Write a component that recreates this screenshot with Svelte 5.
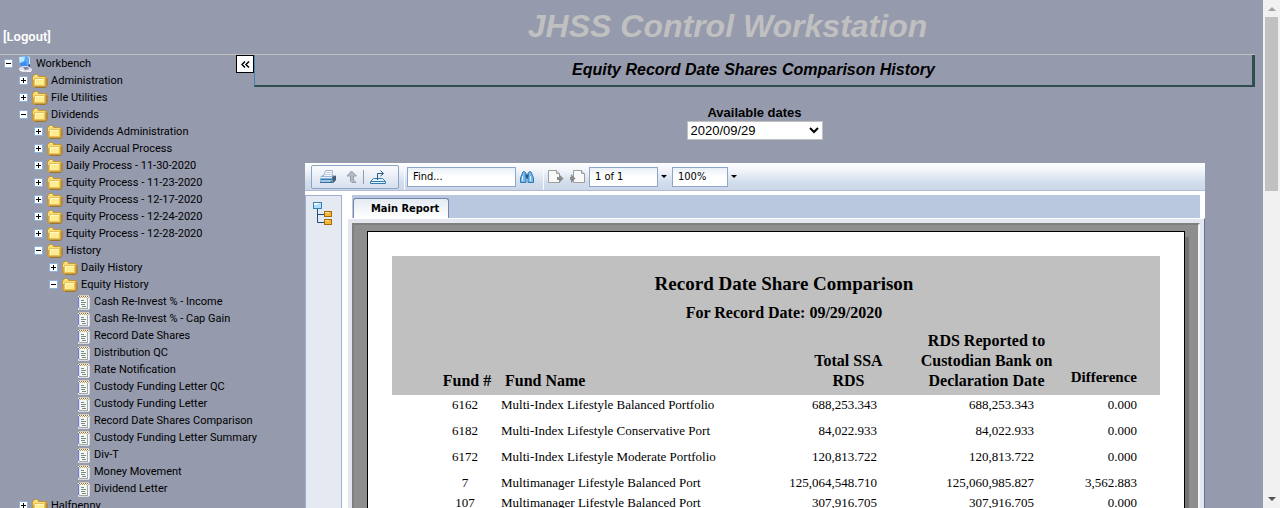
<script>
  const folder = (label, children = [], open = false) => ({ label, children, open, icon: 'folder' });
  const doc = (label) => ({ label, icon: 'doc' });

  let tree = $state([
    {
      label: 'Workbench',
      icon: 'computer',
      open: true,
      children: [
        folder('Administration'),
        folder('File Utilities'),
        folder('Dividends', [
          folder('Dividends Administration'),
          folder('Daily Accrual Process'),
          folder('Daily Process - 11-30-2020'),
          folder('Equity Process - 11-23-2020'),
          folder('Equity Process - 12-17-2020'),
          folder('Equity Process - 12-24-2020'),
          folder('Equity Process - 12-28-2020'),
          folder('History', [
            folder('Daily History'),
            folder('Equity History', [
              doc('Cash Re-Invest % - Income'),
              doc('Cash Re-Invest % - Cap Gain'),
              doc('Record Date Shares'),
              doc('Distribution QC'),
              doc('Rate Notification'),
              doc('Custody Funding Letter QC'),
              doc('Custody Funding Letter'),
              doc('Record Date Shares Comparison'),
              doc('Custody Funding Letter Summary'),
              doc('Div-T'),
              doc('Money Movement'),
              doc('Dividend Letter')
            ], true)
          ], true)
        ], true),
        folder('Halfpenny')
      ]
    }
  ]);

  const rows = [
    { fund: '6162', name: 'Multi-Index Lifestyle Balanced Portfolio', ssa: '688,253.343', rds: '688,253.343', diff: '0.000', tall: true },
    { fund: '6182', name: 'Multi-Index Lifestyle Conservative Port', ssa: '84,022.933', rds: '84,022.933', diff: '0.000', tall: true },
    { fund: '6172', name: 'Multi-Index Lifestyle Moderate Portfolio', ssa: '120,813.722', rds: '120,813.722', diff: '0.000', tall: true },
    { fund: '7', name: 'Multimanager Lifestyle Balanced Port', ssa: '125,064,548.710', rds: '125,060,985.827', diff: '3,562.883' },
    { fund: '107', name: 'Multimanager Lifestyle Balanced Port', ssa: '307,916.705', rds: '307,916.705', diff: '0.000' }
  ];
</script>

{#snippet icon(name)}
  {#if name === 'folder'}
    <svg width="16" height="16" viewBox="0 0 16 16" aria-hidden="true">
      <path d="M0.5 12.5V3.500L2.500 1.500H5.500L7 3.500H14L15 5V12.500L13.500 14H1.500Z" fill="#d2a548" stroke="#c4963a" />
      <path d="M1 4L3 2H5L6.500 4H13V7H1Z" fill="#f8dc74" />
      <path d="M3 2.500H5" stroke="#fff2a6" />
      <path d="M15 5.500V12.500L13.500 14.500H3" fill="none" stroke="#9c7534" />
      <path d="M2.500 5.500H12.500V12.500H2.500Z" fill="#fdec90" stroke="#e6c257" />
      <path d="M3.500 11.500V6.500H12" fill="none" stroke="#fff9c9" />
    </svg>
  {:else if name === 'doc'}
    <svg width="14" height="16" viewBox="0 0 14 16" aria-hidden="true">
      <path d="M1 2H12V15H1Z" fill="#f3f8f5" />
      <path d="M1.500 3V14" stroke="#7a7cc4" />
      <path d="M2.500 3V14" stroke="#dfe2f5" />
      <path d="M10.500 4V14M2 14.500H11" stroke="#a3a8a8" />
      <path d="M12.500 3V15M1 15.500H12" stroke="#d9dbe0" />
      <path d="M2 1.500H12" stroke="#d7cdb8" />
      <path d="M2 2.500H12" stroke="#8e6a30" stroke-dasharray="1 1" />
      <path d="M3 3.500H12" stroke="#c9a566" stroke-dasharray="1 1" />
      <path d="M4 6.500H7M4 8.500H9M4 10.500H8M5 12.500H9" stroke="#7b8886" />
    </svg>
  {:else}
    <svg width="16" height="18" viewBox="0 0 16 18" aria-hidden="true">
      <path d="M2 2L9 1H12V11L9 12L3 11Z" fill="#5aa9f4" />
      <path d="M2 2L8 1.500L7 6L2.500 8Z" fill="#bfe6ff" />
      <path d="M3 9L9 6L10 11L4 11Z" fill="#3e8cee" />
      <path d="M10.500 1.500L12.500 2.500V11" fill="none" stroke="#d6e4f7" />
      <path d="M11 10L13 9V13H11Z" fill="#42529a" />
      <path d="M2 13L6 11H11L15 14V16L12 17H5L2 15Z" fill="#dddfe9" />
      <path d="M6 12L11 12L12 14L8 15Z" fill="#7f83a5" />
      <path d="M3 15.500H7M10 16.500H14" stroke="#f6f6fb" />
    </svg>
  {/if}
{/snippet}

{#snippet branch(nodes, level)}
  <ul>
    {#each nodes as node}
      <li>
        <div class="node" style:padding-left="{4 + level * 15}px">
          {#if node.children}
            <button class="toggle" aria-label="Toggle {node.label}" aria-expanded={node.open} onclick={() => (node.open = !node.open)}>
              <svg width="9" height="9" viewBox="0 0 9 9" aria-hidden="true">
                <rect x="0.5" y="0.5" width="8" height="8" fill="#fff" stroke="#8db3d9" />
                <path d={node.open ? 'M2 4.5H7' : 'M2 4.5H7M4.5 2V7'} stroke="#000" />
              </svg>
            </button>
          {:else}
            <span class="toggle"></span>
          {/if}
          {@render icon(node.icon)}
          <a href="#{node.label}">{node.label}</a>
        </div>
        {#if node.open}{@render branch(node.children, level + 1)}{/if}
      </li>
    {/each}
  </ul>
{/snippet}

<div class="window">
  <div class="page">
    <header>
      <a class="logout" href="#logout">[Logout]</a>
      <h1>JHSS Control Workstation</h1>
    </header>
    <div class="body">
      <nav aria-label="Workbench">
        {@render branch(tree, 0)}
        <button class="collapse" aria-label="Collapse menu">
          <svg width="9" height="7" viewBox="0 0 9 7" aria-hidden="true">
            <path d="M4 .5L1 3.500L4 6.500M8 .5L5 3.500L8 6.500" fill="none" stroke="#000" stroke-width="1.500" />
          </svg>
        </button>
      </nav>
      <main>
        <h2>Equity Record Date Shares Comparison History</h2>
        <div class="dates">
          <label for="date">Available dates</label>
          <div class="select">
            <select id="date"><option>2020/09/29</option></select>
            <svg width="10" height="7" viewBox="0 0 10 7" aria-hidden="true">
              <path d="M1 1L5 5L9 1" fill="none" stroke="#000" stroke-width="2" />
            </svg>
          </div>
        </div>

        <section class="viewer">
          <div class="toolbar">
            <div class="group">
              <button aria-label="Print">
                <svg width="18" height="16" viewBox="0 0 18 16" aria-hidden="true">
                  <path d="M1 8L4 6H14L17 7V11L14 14H1Z" fill="#7fb0da" />
                  <path d="M4.500 7.500L6.500 1.500H13.500L13 7.500Z" fill="#f4f8fd" stroke="#a3b6cc" />
                  <path d="M7 3.500H12M6 5.500H12" stroke="#c2d0df" />
                  <path d="M13 8L17 6.500V11L14 14Z" fill="#4a5b75" />
                  <path d="M1 8.500H13" stroke="#e2f1fd" />
                  <path d="M2 10.500H13" stroke="#3f78ad" />
                  <path d="M1 13.500H14" stroke="#3a6c9f" />
                  <path d="M2 12H12" stroke="#bddbf2" />
                  <path d="M11 12.500H13" stroke="#44b850" />
                </svg>
              </button>
              <button aria-label="Drill up">
                <svg width="12" height="14" viewBox="0 0 12 14" aria-hidden="true">
                  <path d="M5.500 1L10.500 6H7.500V10L10 12.500H6L4.500 11V6H1Z" fill="#b4b9c6" stroke="#979eae" />
                </svg>
              </button>
              <span class="rule"></span>
              <button aria-label="Export">
                <svg width="18" height="16" viewBox="0 0 18 16" aria-hidden="true">
                  <path d="M4.500 9.500H13.500L16.500 12.500V14.500H1.500V12.500Z" fill="#e4f4ff" stroke="#347daf" />
                  <path d="M2 12.500H16" stroke="#347daf" />
                  <path d="M8.500 11V4.500H14M11.500 1.500L14.500 4.500L11.500 7" fill="none" stroke="#245d89" />
                </svg>
              </button>
            </div>
            <span class="divider"></span>
            <input class="find" aria-label="Find" value="Find..." />
            <button class="binoculars" aria-label="Search">
              <svg width="16" height="14" viewBox="0 0 16 14" aria-hidden="true">
                <path d="M1.500 12.500V8L4 2L5 1.500L7 3V12.500Z" fill="#78b7e7" stroke="#2d78b8" />
                <path d="M14.500 12.500V8L12 2L11 1.500L9 3V12.500Z" fill="#78b7e7" stroke="#2d78b8" />
                <path d="M6.500 5.500H9.500M7 7.500H9" stroke="#1c5b9b" stroke-width="2" />
                <path d="M3.500 6V11M11.500 6V11" stroke="#d9f0ff" />
              </svg>
            </button>
            <span class="divider"></span>
            <button aria-label="Previous page">
              <svg width="16" height="14" viewBox="0 0 16 14" aria-hidden="true">
                <path d="M.5 .5H8.500L11.500 3.500V12.500H.5Z" fill="#f9f9f9" stroke="#9d9d9d" />
                <path d="M8.500 .5V3.500H11.500" fill="#ddd" stroke="#9d9d9d" />
                <path d="M9 7H11V4L15.500 8.500L11 13V10H9Z" fill="#8b8b8b" />
              </svg>
            </button>
            <button class="next" aria-label="Next page">
              <svg width="16" height="14" viewBox="0 0 16 14" aria-hidden="true">
                <path d="M4.500 .5H12.500L15.500 3.500V12.500H4.500Z" fill="#f9f9f9" stroke="#9d9d9d" />
                <path d="M12.500 .5V3.500H15.500" fill="#ddd" stroke="#9d9d9d" />
                <path d="M1 7H2V4L6.500 8.500L2 13V10H1Z" fill="#8b8b8b" />
              </svg>
            </button>
            <input class="pageno" aria-label="Page" value="1 of 1" />
            <button class="drop" aria-label="Choose page"><span class="caret"></span></button>
            <input class="zoom" aria-label="Zoom" value="100%" />
            <button class="drop" aria-label="Choose zoom"><span class="caret"></span></button>
          </div>

          <div class="panes">
            <aside>
              <button aria-label="Group tree">
                <svg width="20" height="24" viewBox="0 0 20 24" aria-hidden="true">
                  <path d="M4.500 7V20.500H12M4.500 12.500H12" fill="none" stroke="#1d4d79" />
                  <rect x="0.500" y="0.500" width="8" height="6" fill="#a9e0ff" stroke="#3a80ae" />
                  <path d="M1 1.500H6M1 2.500H4" stroke="#fff" />
                  <rect x="11.500" y="9.500" width="7" height="5" fill="#f7b736" stroke="#a3690f" />
                  <rect x="11.500" y="17.500" width="7" height="5" fill="#f7b736" stroke="#a3690f" />
                  <path d="M12 10.500H16M12 18.500H16" stroke="#ffe69b" />
                </svg>
              </button>
            </aside>
            <div class="report">
              <div class="tabs"><button class="tab">Main Report</button></div>
              <div class="frame">
                <div class="canvas">
                  <div class="paper">
                    <div class="banner">
                      <h3>Record Date Share Comparison</h3>
                      <p>For Record Date: <span>09/29/2020</span></p>
                    </div>
                    <table>
                      <colgroup>
                        <col class="c-fund" /><col /><col class="c-ssa" /><col class="c-rds" /><col class="c-diff" />
                      </colgroup>
                      <thead>
                        <tr>
                          <th class="fund">Fund #</th>
                          <th class="name">Fund Name</th>
                          <th>Total SSA<br />RDS</th>
                          <th>RDS Reported to<br />Custodian Bank on<br />Declaration Date</th>
                          <th class="diff">Difference</th>
                        </tr>
                      </thead>
                      <tbody>
                        {#each rows as row}
                          <tr class:tall={row.tall}>
                            <td class="fund">{row.fund}</td>
                            <td>{row.name}</td>
                            <td class="ssa">{row.ssa}</td>
                            <td class="rds">{row.rds}</td>
                            <td class="diff">{row.diff}</td>
                          </tr>
                        {/each}
                      </tbody>
                    </table>
                  </div>
                  <div class="shadow"></div>
                </div>
              </div>
            </div>
          </div>
        </section>
      </main>
    </div>
  </div>
  <div class="scrollbar" aria-hidden="true">
    <span class="arrow up"></span>
    <span class="thumb"></span>
    <span class="arrow down"></span>
  </div>
</div>

<style>
  :global(body) { background: #959aad; }
  * { box-sizing: border-box; }
  button { border: 0; padding: 0; background: none; display: flex; align-items: center; justify-content: center; flex: none; }
  svg { display: block; flex: none; }
  h1, h2, h3, p, ul { margin: 0; padding: 0; }

  .window { display: flex; height: 100vh; overflow: hidden; font-family: 'Liberation Sans', Arial, sans-serif; color: #000; }
  .page { flex: 1; min-width: 0; display: flex; flex-direction: column; padding-right: 8px; }

  header { display: flex; flex: none; height: 55px; border-bottom: 1px solid #c0c0c0; }
  .logout { width: 200px; padding: 28px 0 0 3px; font: 600 13px/18px 'Noto Sans', Tahoma, sans-serif; color: #fff; text-decoration: none; }
  .logout { font-family: Roboto, Tahoma, sans-serif; }
  h1 { flex: 1; text-align: center; font-size: 32px; line-height: 36px; font-style: italic; padding-top: 8px; color: #c0c0c0; }

  .body { display: flex; flex: 1; min-height: 0; }
  nav { width: 254px; flex: none; position: relative; font: 11px/17px Roboto, Tahoma, sans-serif; }
  ul { list-style: none; }
  .node { display: flex; align-items: center; height: 17px; white-space: nowrap; }
  .toggle { width: 9px; margin-right: 4px; flex: none; }
  .node a { margin-left: 3px; color: #000; text-decoration: none; }
  .collapse { position: absolute; top: 0; right: 0; width: 18px; height: 18px; background: #fff; border: 1px solid #000; }

  main { flex: 1; min-width: 0; display: flex; flex-direction: column; }
  h2 { flex: none; height: 32px; border: solid #2f4f4f; border-width: 0 3px 2px 1px; border-left-color: #4682b4; text-align: center; font-size: 16px; line-height: 30px; font-style: italic; }
  .dates { flex: none; display: flex; flex-direction: column; align-items: center; padding-top: 18px; }
  .dates label { font-size: 13px; line-height: 16px; font-weight: bold; }
  .select { position: relative; width: 136px; }
  select { appearance: none; display: block; width: 100%; height: 19px; padding: 0 3px; background: #fff; border: 1px solid #c0c0c0; border-radius: 0; font: 13px 'Liberation Sans', Arial, sans-serif; color: #000; }
  .select svg { position: absolute; right: 4px; top: 6px; pointer-events: none; }

  .viewer { flex: 1; min-height: 0; display: flex; flex-direction: column; margin: 23px 50px 0 51px; background: #fff; font: 11px 'DejaVu Sans Condensed', Tahoma, sans-serif; }
  .toolbar { flex: none; display: flex; align-items: center; height: 28px; padding-left: 6px; background: linear-gradient(#fff, #f0f3f9 30%, #d3deed 70%, #cbd7e8); border-bottom: 1px solid #b5bad2; }
  .group { display: flex; align-items: center; width: 88px; height: 24px; padding: 0 7px; gap: 9px; border: 1px solid #8aa5c3; border-radius: 2px; background: linear-gradient(#fafbfd, #d7e0ee); }
  .rule { width: 1px; height: 14px; background: #8e9bb5; margin: 0 -4px; }
  .divider { width: 1px; height: 26px; background: #f8faff; margin: 0 2px 0 5px; }
  input { height: 20px; padding: 0 5px; border: 1px solid #8ea6cb; background: linear-gradient(#e9f0f6, #fff 50%); font: inherit; color: #000; }
  .find { width: 109px; }
  .binoculars { margin: 0 3px; }
  .divider + button { margin-left: 2px; }
  .next { margin: 0 4px 0 5px; }
  .pageno { width: 69px; }
  .zoom { width: 56px; }
  .drop { width: 12px; height: 20px; margin-right: 2px; }
  .caret { border: solid transparent; border-width: 3px 3px 0; border-top-color: #000; }

  .panes { flex: 1; min-height: 0; display: flex; padding-top: 4px; }
  aside { width: 37px; flex: none; padding: 6px 0 0 7px; background: #e4e9f2; border: solid #a0aec9; border-width: 1px 1px 0 1px; }
  .report { flex: 1; min-width: 0; display: flex; flex-direction: column; }
  .tabs { flex: none; height: 23px; display: flex; align-items: flex-end; margin: 0 5px 0 10px; padding-left: 1px; background: #b9c8df; }
  .tab { height: 20px; padding: 0 9px 0 17px; border: 1px solid #7387ad; border-bottom: 0; border-radius: 3px 3px 0 0; background: linear-gradient(#e4ebf2, #fff); font: bold 11px 'DejaVu Sans Condensed', Tahoma, sans-serif; color: #000; }
  .frame { flex: 1; min-height: 0; display: flex; margin-left: 6px; padding: 4px 4px 0 4px; background: #e4e6f0; border-top: 1px solid #fff; border-right: 1px solid #6c7096; }
  .canvas { flex: 1; min-width: 0; display: flex; padding: 6px 9px 0 13px; background: #8e8e8e; border: solid #7f7f7f; border-width: 2px 2px 0 2px; border-right-color: #f5f5f5; }
  .paper { flex: 1; min-width: 0; padding: 24px 24px 0; background: #fff; border: 1px solid #000; border-bottom: 0; font-family: 'Liberation Serif', 'Times New Roman', serif; }
  .shadow { width: 4px; margin-top: 6px; background: #737373; }

  .banner { height: 74px; padding: 17px 0 0 16px; background: #c0c0c0; text-align: center; }
  h3 { font-size: 19px; line-height: 22px; }
  .banner p { padding-top: 8px; font-size: 16px; line-height: 20px; font-weight: bold; }
  table { width: 100%; table-layout: fixed; border-collapse: collapse; font-size: 13px; line-height: 20px; }
  .c-fund { width: 109px; }
  .c-ssa { width: 121px; }
  .c-rds { width: 155px; }
  .c-diff { width: 96px; }
  thead { background: #c0c0c0; }
  th { padding: 1px 0 4px; font-size: 16px; vertical-align: bottom; }
  td { padding: 0; height: 20px; vertical-align: top; }
  .tall td { height: 26px; }
  .fund { padding-left: 37px; text-align: center; white-space: nowrap; }
  th.fund { padding-left: 41px; }
  th.name { padding-left: 4px; text-align: left; }
  td.ssa { padding-right: 32px; text-align: right; }
  td.rds { padding-right: 30px; text-align: right; }
  .diff { padding-right: 23px; text-align: right; }
  th.diff { font-size: 15px; padding-bottom: 8px; }

  .scrollbar { width: 17px; flex: none; display: flex; flex-direction: column; align-items: center; background: #f1f1f1; }
  .thumb { width: 13px; height: 34.3%; background: #c1c1c1; }
  .arrow { flex: none; width: 8px; height: 4px; border: solid transparent; border-width: 0 4px 4px; }
  .up { margin: 7px 0 6px; border-bottom-color: #a3a3a3; }
  .down { margin: auto 0 7px; border-width: 4px 4px 0; border-top-color: #505050; }
</style>
